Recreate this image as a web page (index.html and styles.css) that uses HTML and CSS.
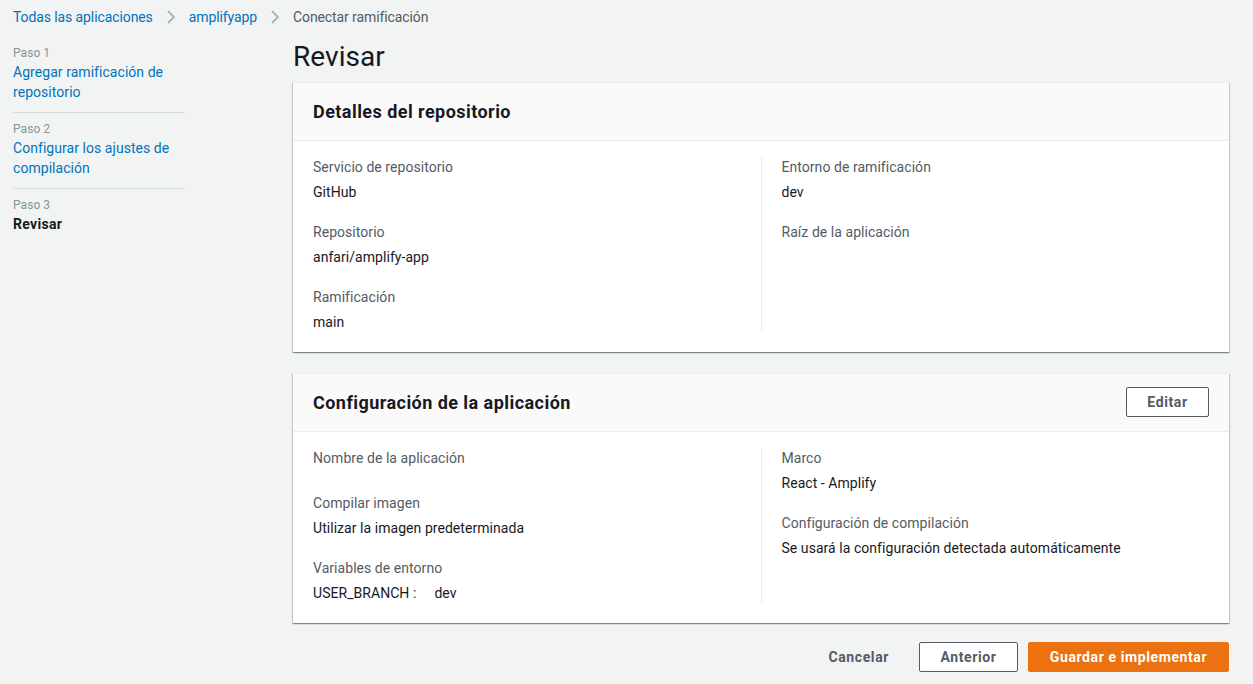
FILE: index.html
```html
<!DOCTYPE html>
<html lang="es">
<head>
<meta charset="utf-8">
<title>Revisar</title>
<link rel="stylesheet" href="styles.css">
</head>
<body>
<nav class="crumbs">
  <a class="crumb-link" href="#">Todas las aplicaciones</a>
  <svg class="chev" width="12" height="16" viewBox="0 0 12 16"><path d="M3 2l6 6-6 6" fill="none" stroke="#aab7b8" stroke-width="2"/></svg>
  <a class="crumb-link" href="#">amplifyapp</a>
  <svg class="chev" width="12" height="16" viewBox="0 0 12 16"><path d="M3 2l6 6-6 6" fill="none" stroke="#aab7b8" stroke-width="2"/></svg>
  <span class="crumb-current">Conectar ramificación</span>
</nav>
<div class="layout">
  <aside class="steps">
    <div class="step">
      <div class="step-num">Paso 1</div>
      <a class="step-link" href="#">Agregar ramificación de repositorio</a>
    </div>
    <div class="step">
      <div class="step-num">Paso 2</div>
      <a class="step-link" href="#">Configurar los ajustes de compilación</a>
    </div>
    <div class="step last">
      <div class="step-num">Paso 3</div>
      <div class="step-current">Revisar</div>
    </div>
  </aside>
  <main class="main">
    <h1 class="title">Revisar</h1>
    <section class="card">
      <header class="card-head"><h2>Detalles del repositorio</h2></header>
      <div class="card-body">
        <div class="col">
          <div class="item"><div class="label">Servicio de repositorio</div><div class="value">GitHub</div></div>
          <div class="item"><div class="label">Repositorio</div><div class="value">anfari/amplify-app</div></div>
          <div class="item"><div class="label">Ramificación</div><div class="value">main</div></div>
        </div>
        <div class="col right">
          <div class="item"><div class="label">Entorno de ramificación</div><div class="value">dev</div></div>
          <div class="item"><div class="label">Raíz de la aplicación</div><div class="value"></div></div>
        </div>
      </div>
    </section>
    <section class="card">
      <header class="card-head"><h2>Configuración de la aplicación</h2><button class="btn">Editar</button></header>
      <div class="card-body">
        <div class="col">
          <div class="item"><div class="label">Nombre de la aplicación</div><div class="value"></div></div>
          <div class="item"><div class="label">Compilar imagen</div><div class="value">Utilizar la imagen predeterminada</div></div>
          <div class="item"><div class="label">Variables de entorno</div><div class="value"><span class="env-key">USER_BRANCH :</span>dev</div></div>
        </div>
        <div class="col right">
          <div class="item"><div class="label">Marco</div><div class="value">React - Amplify</div></div>
          <div class="item"><div class="label">Configuración de compilación</div><div class="value">Se usará la configuración detectada automáticamente</div></div>
        </div>
      </div>
    </section>
    <div class="actions">
      <button class="btn-link">Cancelar</button>
      <button class="btn">Anterior</button>
      <button class="btn primary">Guardar e implementar</button>
    </div>
  </main>
</div>
</body>
</html>
```
FILE: styles.css
```css
* { box-sizing: border-box; }
html, body { margin: 0; padding: 0; }
body {
  background: #f2f3f3;
  font-family: Roboto, "Liberation Sans", sans-serif;
  font-size: 14px;
  line-height: 20px;
  color: #16191f;
  letter-spacing: 0.05px;
}
a { text-decoration: none; }
.crumbs {
  display: flex;
  align-items: center;
  padding: 7px 13px 0;
  height: 27px;
  letter-spacing: -0.1px;
}
.crumb-link { color: #0073bb; }
.chev { margin: 0 12px 0 12px; }
.crumb-current { color: #545b64; }
.layout {
  display: flex;
  padding: 12px 24px 0 13px;
}
.steps { width: 172px; flex: none; margin-right: 108px; padding-top: 6px; }
.step { border-bottom: 1px solid #d5dbdb; padding: 0 0 10px; margin-bottom: 8px; }
.step.last { border-bottom: none; }
.step-num { color: #879596; font-size: 12px; line-height: 16px; margin-bottom: 1px; }
.step-link { color: #0073bb; display: block; }
.step-current { font-weight: 700; letter-spacing: 0.3px; }
.main { flex: 1; min-width: 0; }
.title {
  margin: 0;
  font-size: 28px;
  line-height: 36px;
  font-weight: 400;
  padding-bottom: 7px;
}
.card {
  background: #fff;
  box-shadow: 0 1px 1px 0 rgba(0,28,36,.3), 1px 1px 1px 0 rgba(0,28,36,.15), -1px 1px 1px 0 rgba(0,28,36,.15);
  border-top: 1px solid #eaeded;
  margin-bottom: 21px;
}
.card-head {
  background: #fafafa;
  border-bottom: 1px solid #eaeded;
  height: 58px;
  padding: 0 20px;
  display: flex;
  align-items: center;
  justify-content: space-between;
}
.card-head h2 { margin: 0; font-size: 18px; line-height: 24px; font-weight: 700; letter-spacing: 0.45px; }
.card-body {
  display: flex;
  padding: 16px 20px 20px;
}
.col { flex: 1; padding-right: 20px; }
.col.right { border-left: 1px solid #eaeded; padding-left: 20px; padding-right: 0; }
.item { display: flex; flex-direction: column; gap: 5px; margin-bottom: 20px; }
.item:last-child { margin-bottom: 0; }
.label { color: #545b64; }
.env-key { margin-right: 18px; }
.btn {
  font-family: inherit;
  font-size: 14px;
  font-weight: 700;
  letter-spacing: 0.6px;
  color: #545b64;
  background: #fff;
  border: 1px solid #545b64;
  border-radius: 2px;
  height: 30px;
  padding: 0 20px;
  cursor: pointer;
}
.card-head .btn { height: 30px; width: 83px; margin-top: -1px; }
.btn.primary { background: #ec7211; border-color: #ec7211; color: #fff; }
.btn-link {
  font-family: inherit;
  font-size: 14px;
  font-weight: 700;
  letter-spacing: 0.6px;
  color: #545b64;
  background: none;
  border: none;
  padding: 0 20px;
  height: 30px;
}
.actions {
  display: flex;
  justify-content: flex-end;
  gap: 10px;
  margin-top: -2px;
}
.actions .btn:nth-child(2) { width: 99px; }
.actions .primary { width: 201px; }
```
